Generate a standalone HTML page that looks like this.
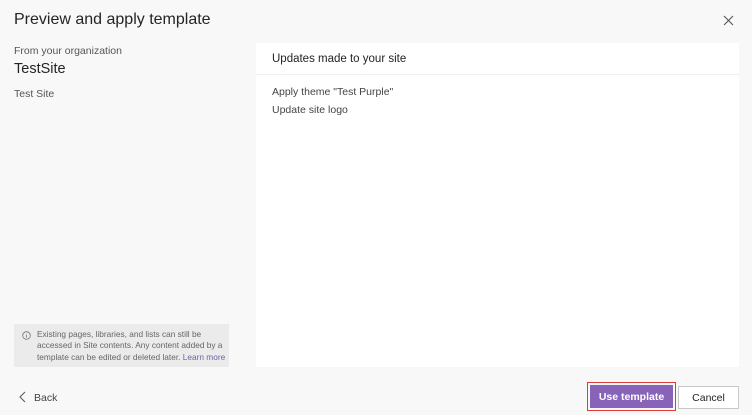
<!DOCTYPE html>
<html><head><style>
body{margin:0;width:752px;height:415px;background:#f8f8f8;font-family:"Liberation Sans",sans-serif;position:relative;overflow:hidden;color:#252423}
.a{position:absolute;white-space:nowrap}
</style></head><body>
<div class="a" style="left:14px;top:11px;font-size:16px;color:#252423">Preview and apply template</div>
<svg class="a" style="left:723px;top:15px" width="11" height="11" viewBox="0 0 11 11"><path d="M1 1L10 10M10 1L1 10" stroke="#555" stroke-width="1.1"/></svg>
<div class="a" style="left:14px;top:45px;font-size:10.5px;color:#555">From your organization</div>
<div class="a" style="left:14px;top:61px;font-size:14.5px;color:#252423">TestSite</div>
<div class="a" style="left:14px;top:88px;font-size:10.5px;color:#555">Test Site</div>
<div class="a" style="left:256px;top:43px;width:483px;height:324px;background:#fff"></div>
<div class="a" style="left:256px;top:74px;width:483px;height:1px;background:#f0f0f0"></div>
<div class="a" style="left:272px;top:53px;font-size:11.5px;color:#252423">Updates made to your site</div>
<div class="a" style="left:272px;top:86px;font-size:10.5px;color:#444">Apply theme "Test Purple"</div>
<div class="a" style="left:272px;top:104px;font-size:10.5px;color:#444">Update site logo</div>
<div class="a" style="left:14px;top:324px;width:215px;height:43px;background:#ebebeb"></div>
<svg class="a" style="left:22px;top:331px" width="9" height="9" viewBox="0 0 9 9"><circle cx="4.5" cy="4.5" r="3.8" fill="none" stroke="#777" stroke-width="0.8"/><path d="M4.5 4v2.5M4.5 2.6v.6" stroke="#777" stroke-width="0.8"/></svg>
<div class="a" style="left:37px;top:329px;font-size:8.3px;line-height:11.3px;color:#666">Existing pages, libraries, and lists can still be<br>accessed in Site contents. Any content added by a<br>template can be edited or deleted later. <span style="color:#7160a8">Learn more</span></div>
<svg class="a" style="left:19px;top:391px" width="7" height="12" viewBox="0 0 7 12"><path d="M6 1L1 6L6 11" fill="none" stroke="#555" stroke-width="1"/></svg>
<div class="a" style="left:34px;top:392px;font-size:10.5px;color:#444">Back</div>
<div class="a" style="left:587px;top:382px;width:87px;height:27px;border:1px solid #e03c3c"></div>
<div class="a" style="left:590px;top:385px;width:83px;height:23px;background:#8764b8;color:#fff;font-size:10.5px;font-weight:bold;text-align:center;line-height:25px">Use template</div>
<div class="a" style="left:678px;top:386px;width:59px;height:21px;background:#fff;border:1px solid #c8c8c8;font-size:10.5px;text-align:center;line-height:23px;color:#252423">Cancel</div>
</body></html>
